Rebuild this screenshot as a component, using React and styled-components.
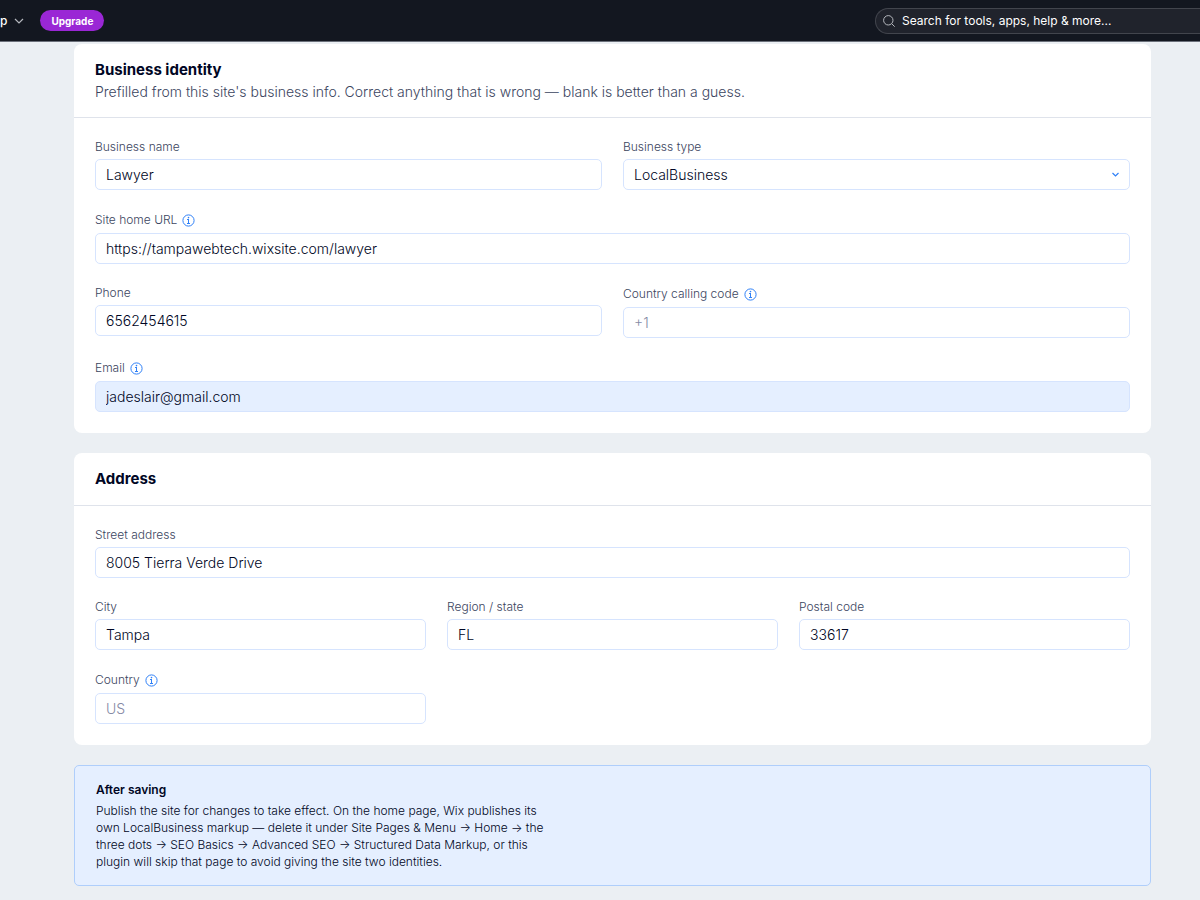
import React from 'react';
import styled, { createGlobalStyle } from 'styled-components';

const GlobalStyle = createGlobalStyle`
    * {
        box-sizing: border-box;
    }
    body {
        margin: 0;
        background: #ebeff3;
        color: #000624;
        font-family: Inter, "Liberation Sans", sans-serif;
    }
    input, select, button {
        font-family: inherit;
    }
`
const TopBar = styled.header`
    display: flex;
    align-items: center;
    justify-content: space-between;
    height: 42px;
    background: #131720;
    border-bottom: 1px solid #6b707a;
`
const TopBarLeft = styled.div`
    display: flex;
    align-items: center;
    gap: 16px;
`
const MenuButton = styled.button`
    display: flex;
    align-items: center;
    gap: 7px;
    padding: 0;
    border: 0;
    background: none;
    color: #ffffff;
    font-size: 12px;
    font-weight: 500;
    line-height: 20px;
`
const UpgradeButton = styled.button`
    height: 21px;
    padding: 0 11px;
    border: 0;
    border-radius: 11px;
    background: #9a27d5;
    color: #ffffff;
    font-size: 10px;
    font-weight: 700;
`
const SearchBox = styled.label`
    display: flex;
    align-items: center;
    gap: 7px;
    width: 325px;
    height: 26px;
    padding-left: 7px;
    border: 1px solid #42454d;
    border-right: 0;
    border-radius: 13px 0 0 13px;
    background: #20232c;
`
const SearchInput = styled.input`
    flex: 1;
    min-width: 0;
    padding: 0;
    border: 0;
    outline: 0;
    background: none;
    color: #ffffff;
    font-size: 12px;
    &::placeholder {
        color: #ffffff;
        opacity: 1;
    }
`
const Page = styled.main`
    display: flex;
    flex-direction: column;
    gap: 20px;
    padding: 2px 49px 14px 74px;
`
const Card = styled.section`
    border-radius: 8px;
    background: #ffffff;
`
const CardHeader = styled.div`
    padding: 15px 21px;
    border-bottom: 1px solid #dfe3eb;
`
const CardTitle = styled.h2`
    margin: 0;
    font-size: 15px;
    font-weight: 700;
    line-height: 22px;
`
const CardSubtitle = styled.p`
    margin: 0;
    color: #3b4560;
    font-size: 14px;
    font-weight: 300;
    line-height: 21px;
`
const CardBody = styled.div`
    display: flex;
    flex-direction: column;
    gap: 21px;
    padding: 21px;
`
const FieldRow = styled.div`
    display: grid;
    grid-template-columns: repeat(${ props => props.$columns || 1 }, 1fr);
    align-items: start;
    gap: 21px;
`
const FieldContainer = styled.div`
    display: flex;
    flex-direction: column;
    gap: 4px;
    min-width: 0;
`
const FieldHeading = styled.div`
    display: flex;
    align-items: center;
    gap: 5px;
    height: ${ props => props.$info ? '18px' : '16px' };
`
const FieldLabel = styled.label`
    color: #3b4560;
    font-size: 12px;
    font-weight: 300;
    line-height: 16px;
`
const InfoButton = styled.button`
    display: flex;
    padding: 0;
    border: 0;
    background: none;
`
const FieldInput = styled.input`
    width: 100%;
    height: 31px;
    padding: 0 10px;
    border: 1px solid #d6e4fe;
    border-radius: 5px;
    background: ${ props => props.$filled ? '#e5efff' : '#ffffff' };
    color: #000624;
    font-size: 14px;
    font-weight: 300;
    &::placeholder {
        color: #868aa5;
        opacity: 1;
    }
`
const SelectContainer = styled.div`
    display: grid;
    align-items: center;
    & > * {
        grid-area: 1 / 1;
    }
`
const FieldSelect = styled.select`
    width: 100%;
    height: 31px;
    padding: 0 10px;
    border: 1px solid #d6e4fe;
    border-radius: 5px;
    appearance: none;
    background: #ffffff;
    color: #000624;
    font-size: 14px;
    font-weight: 300;
`
const SelectArrow = styled.svg`
    justify-self: end;
    margin-right: 10px;
    pointer-events: none;
`
const Notice = styled.section`
    padding: 15px 21px;
    border: 1px solid #afcefb;
    border-radius: 5px;
    background: #e5efff;
`
const NoticeTitle = styled.h3`
    margin: 0 0 4px;
    font-size: 12px;
    font-weight: 600;
    line-height: 17px;
`
const NoticeText = styled.p`
    margin: 0;
    color: #000624;
    font-size: 12px;
    font-weight: 300;
    line-height: 17px;
`

function InfoIcon() {
    return (
        <svg width="13" height="13" viewBox="0 0 13 13" fill="none" stroke="#2f80f7">
            <circle cx="6.5" cy="6.5" r="5.6" />
            <path d="M5 5.5h2M6.5 5.5v4M5 9.5h3" />
            <circle cx="6.5" cy="3.6" r="0.8" fill="#2f80f7" stroke="none" />
        </svg>
    )
}

function Field(props) {
    return (
        <FieldContainer>
            <FieldHeading $info={ props.info }>
                <FieldLabel htmlFor={ props.id }>{ props.label }</FieldLabel>
                { props.info && <InfoButton type="button" aria-label={ 'About ' + props.label }><InfoIcon /></InfoButton> }
            </FieldHeading>
            { props.children || (
                <FieldInput
                    id={ props.id }
                    type={ props.type || 'text' }
                    defaultValue={ props.value }
                    placeholder={ props.placeholder }
                    $filled={ props.filled }
                />
            ) }
        </FieldContainer>
    )
}

function App() {
    return (
        <>
            <GlobalStyle />
            <TopBar>
                <TopBarLeft>
                    <MenuButton type="button">
                        p
                        <svg width="10" height="10" viewBox="0 0 10 10" fill="none" stroke="#b4b7bd" strokeWidth="1.2">
                            <path d="M1 3l4 4 4-4" />
                        </svg>
                    </MenuButton>
                    <UpgradeButton type="button">Upgrade</UpgradeButton>
                </TopBarLeft>
                <SearchBox>
                    <svg width="12" height="12" viewBox="0 0 12 12" fill="none" stroke="#b4b7bd">
                        <circle cx="5.3" cy="5.3" r="4.7" />
                        <path d="M8.7 8.7l3 3" />
                    </svg>
                    <SearchInput type="search" aria-label="Search" placeholder="Search for tools, apps, help & more..." />
                </SearchBox>
            </TopBar>
            <Page>
                <Card>
                    <CardHeader>
                        <CardTitle>Business identity</CardTitle>
                        <CardSubtitle>Prefilled from this site's business info. Correct anything that is wrong — blank is better than a guess.</CardSubtitle>
                    </CardHeader>
                    <CardBody>
                        <FieldRow $columns={ 2 }>
                            <Field id="name" label="Business name" value="Lawyer" />
                            <Field id="type" label="Business type">
                                <SelectContainer>
                                    <FieldSelect id="type" defaultValue="LocalBusiness">
                                        <option>LocalBusiness</option>
                                    </FieldSelect>
                                    <SelectArrow width="9" height="9" viewBox="0 0 9 9" fill="none" stroke="#2f80f7" strokeWidth="1.2">
                                        <path d="M1.5 3l3 3 3-3" />
                                    </SelectArrow>
                                </SelectContainer>
                            </Field>
                        </FieldRow>
                        <FieldRow>
                            <Field id="url" label="Site home URL" info value="https://tampawebtech.wixsite.com/lawyer" />
                        </FieldRow>
                        <FieldRow $columns={ 2 }>
                            <Field id="phone" type="tel" label="Phone" value="6562454615" />
                            <Field id="code" label="Country calling code" info placeholder="+1" />
                        </FieldRow>
                        <FieldRow>
                            <Field id="email" type="email" label="Email" info filled value="jadeslair@gmail.com" />
                        </FieldRow>
                    </CardBody>
                </Card>
                <Card>
                    <CardHeader>
                        <CardTitle>Address</CardTitle>
                    </CardHeader>
                    <CardBody>
                        <FieldRow>
                            <Field id="street" label="Street address" value="8005 Tierra Verde Drive" />
                        </FieldRow>
                        <FieldRow $columns={ 3 }>
                            <Field id="city" label="City" value="Tampa" />
                            <Field id="region" label="Region / state" value="FL" />
                            <Field id="postal" label="Postal code" value="33617" />
                        </FieldRow>
                        <FieldRow $columns={ 3 }>
                            <Field id="country" label="Country" info placeholder="US" />
                        </FieldRow>
                    </CardBody>
                </Card>
                <Notice>
                    <NoticeTitle>After saving</NoticeTitle>
                    <NoticeText>
                        Publish the site for changes to take effect. On the home page, Wix publishes its<br />
                        own LocalBusiness markup — delete it under Site Pages & Menu → Home → the<br />
                        three dots → SEO Basics → Advanced SEO → Structured Data Markup, or this<br />
                        plugin will skip that page to avoid giving the site two identities.
                    </NoticeText>
                </Notice>
            </Page>
        </>
    )
}

export default App;
